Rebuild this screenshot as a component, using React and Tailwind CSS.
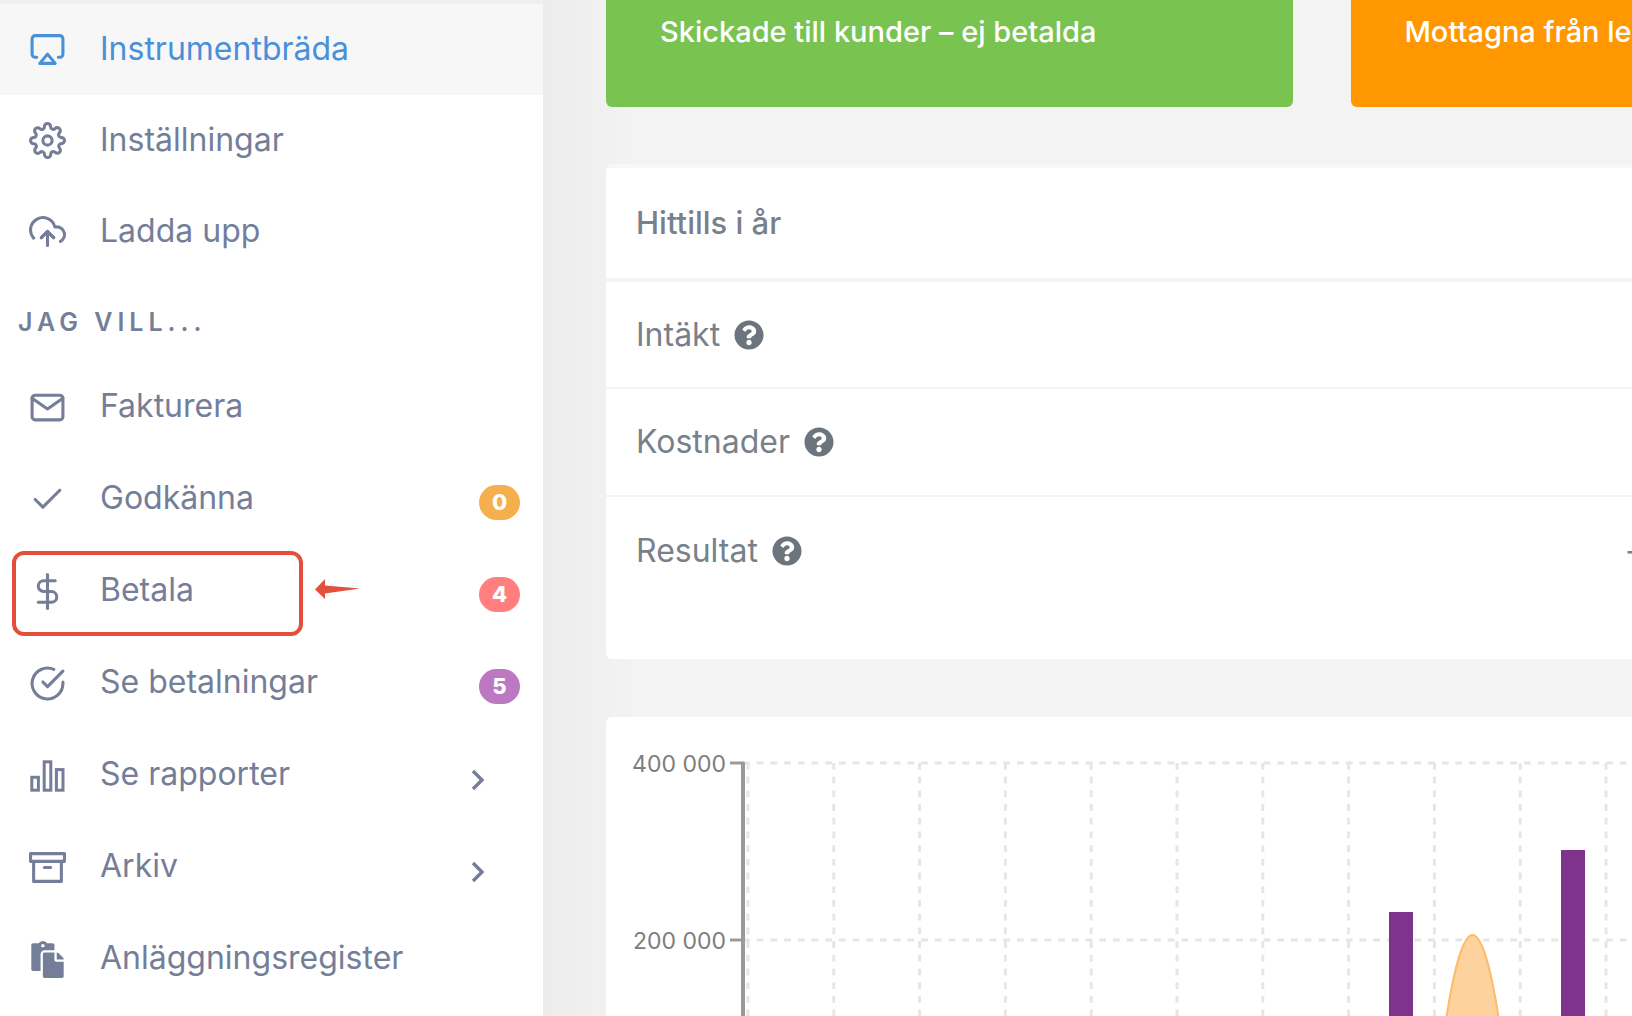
import React from 'react';
import {
  FiAirplay,
  FiArchive,
  FiCheck,
  FiCheckCircle,
  FiDollarSign,
  FiMail,
  FiSettings,
  FiUploadCloud
} from 'react-icons/fi';
import { FaPaste, FaQuestionCircle } from 'react-icons/fa';

const BarsIcon = () => (
  <svg className="w-[37px] h-[37px]" viewBox="0 0 37 37" fill="none" stroke="currentColor" strokeWidth="3">
    <rect x="2.8" y="20.3" width="6.6" height="12.9" />
    <rect x="15.2" y="4.8" width="6.6" height="28.4" />
    <rect x="27.4" y="12.6" width="6.6" height="20.6" />
  </svg>
);

const Chevron = () => (
  <svg className="w-[14px] h-[22px]" viewBox="0 0 14 22" fill="none" stroke="currentColor" strokeWidth="3.4" aria-hidden="true">
    <path d="M2 2 L11 11 L2 20" />
  </svg>
);

const mainItems = [
  { label: 'Instrumentbräda', icon: FiAirplay, active: true },
  { label: 'Inställningar', icon: FiSettings },
  { label: 'Ladda upp', icon: FiUploadCloud }
];

const actionItems = [
  { label: 'Fakturera', icon: FiMail },
  { label: 'Godkänna', icon: FiCheck, badge: '0', badgeClass: 'bg-[#f5b04d]' },
  { label: 'Betala', icon: FiDollarSign, badge: '4', badgeClass: 'bg-[#ff7f7e]', highlighted: true },
  { label: 'Se betalningar', icon: FiCheckCircle, badge: '5', badgeClass: 'bg-[#bc78c0]' },
  { label: 'Se rapporter', icon: BarsIcon, expandable: true },
  { label: 'Arkiv', icon: FiArchive, expandable: true },
  { label: 'Anläggningsregister', icon: FaPaste }
];

const rows = [
  { label: 'Intäkt', value: '' },
  { label: 'Kostnader', value: '' },
  { label: 'Resultat', value: '-' }
];

const NavItem = ({ item, className }) => {
  const Icon = item.icon;
  return (
    <li className="relative">
      <a
        href="#"
        className={`flex items-center pl-[29px] text-[32px] leading-10 ${className} ${
          item.active ? 'bg-[#f7f7f7] text-[#4a90d9]' : 'text-[#747e99]'
        }`}
      >
        <Icon className="w-[37px] h-[37px] shrink-0" />
        <span className="ml-[34px] flex-1 pb-[2px]">{item.label}</span>
        {item.badge && (
          <span
            className={`mt-[6px] mr-[23px] flex h-[35px] w-[41px] items-center justify-center rounded-full 
              text-[22px] leading-none font-extrabold text-white ${item.badgeClass}`}
          >
            {item.badge}
          </span>
        )}
        {item.expandable && (
          <span className="mt-[10px] mr-[58px]">
            <Chevron />
          </span>
        )}
      </a>
      {item.highlighted && (
        <>
          <div className="pointer-events-none absolute top-[6px] left-[12px] h-[85px] w-[291px] rounded-xl border-4 border-[#e2503b]" />
          <svg className="pointer-events-none absolute top-[34px] left-[315px] h-[20px] w-[45px]" viewBox="0 0 45 20">
            <path d="M0 10.5 L10 0 L10 6.5 L45 9.5 L10 14.5 L10 20 Z" fill="#e2503b" />
          </svg>
        </>
      )}
    </li>
  );
};

const Sidebar = () => (
  <nav className="w-[543px] shrink-0 border-t-4 border-[#efefef] bg-white">
    <ul>
      {mainItems.map((item) => (
        <NavItem key={item.label} item={item} className="h-[91px]" />
      ))}
    </ul>
    <h2 className="flex h-[84px] items-center pt-2 pl-[18px] text-[25px] font-semibold tracking-[5px] text-[#747e99]">
      JAG VILL...
    </h2>
    <ul>
      {actionItems.map((item) => (
        <NavItem key={item.label} item={item} className="h-[92px]" />
      ))}
    </ul>
  </nav>
);

const SummaryTable = () => (
  <section className="mt-[57px] -mr-2 rounded-md border-t-4 border-[#f7f7f7] bg-white pb-[55px]">
    <table className="w-full text-left text-[32px] leading-10 text-[#78818b]">
      <thead>
        <tr className="h-[112px] border-b-4 border-[#f3f3f3] text-[31px]">
          <th colSpan={2} className="pl-[30px] font-medium">Hittills i år</th>
        </tr>
      </thead>
      <tbody>
        {rows.map((row) => (
          <tr key={row.label} className="h-[108px] border-b-2 border-[#f3f3f3] last:border-0">
            <th scope="row" className="pl-[30px] font-normal">
              <span className="flex items-center gap-[14px]">
                {row.label}
                <FaQuestionCircle className="h-[30px] w-[30px] text-[#6c757d]" />
              </span>
            </th>
            <td className="text-right">{row.value}</td>
          </tr>
        ))}
      </tbody>
    </table>
  </section>
);

const COLUMN_STEP = 85.8;
const gridColumns = Array.from({ length: 24 }, (_, i) => 142 + i * COLUMN_STEP);
const yTicks = [
  { label: '400 000', y: 46 },
  { label: '200 000', y: 223 }
];
const bars = [
  { x: 783, y: 195 },
  { x: 955, y: 133 }
];

const Chart = () => (
  <section className="mt-[58px] -mr-2 rounded-t-md bg-white">
    <svg className="block h-[304px] w-full" role="img" aria-label="Resultat per månad">
      <g stroke="#e6e6e6" strokeWidth="3" strokeDasharray="6.8 6.9">
        {yTicks.map((tick) => (
          <line key={tick.label} x1="137" y1={tick.y} x2="100%" y2={tick.y} />
        ))}
        {gridColumns.map((x) => (
          <line key={x} x1={x} y1="46" x2={x} y2="100%" />
        ))}
      </g>
      <g stroke="#9a9a9a">
        <line x1="137" y1="45" x2="137" y2="100%" strokeWidth="4" />
        {yTicks.map((tick) => (
          <line key={tick.label} x1="124" y1={tick.y} x2="138" y2={tick.y} strokeWidth="3" />
        ))}
      </g>
      <g fill="#7d7d7d" fontSize="23" textAnchor="end">
        {yTicks.map((tick) => (
          <text key={tick.label} x="120" y={tick.y + 9}>{tick.label}</text>
        ))}
      </g>
      {bars.map((bar) => (
        <rect key={bar.x} x={bar.x} y={bar.y} width="24" height="200" fill="#80338d" />
      ))}
      <path
        d="M839 310 C846 262 856 218 866.5 218 C877 218 887 262 894 310"
        fill="#fdd29c"
        stroke="#fdbc6b"
        strokeWidth="2"
      />
    </svg>
  </section>
);

const App = () => {
  return (
    <div className="flex h-screen overflow-hidden bg-[#f3f3f3] font-['Inter',sans-serif]">
      <Sidebar />
      <main className="min-w-0 flex-1 overflow-hidden bg-linear-to-r from-[#ececed] to-[#f3f3f3] to-[90px] pl-[63px]">
        <div className="flex h-[107px] gap-[58px] text-[29px] leading-10 font-medium whitespace-nowrap text-white">
          <div className="w-[67%] shrink-0 rounded-b-md bg-[#79c450] pt-3 pl-[54px]">
            Skickade till kunder – ej betalda
          </div>
          <div className="min-w-0 flex-1 rounded-bl-md bg-[#ff9800] pt-3 pl-[53px]">Mottagna från le</div>
        </div>
        <SummaryTable />
        <Chart />
      </main>
    </div>
  );
};

export default App;
